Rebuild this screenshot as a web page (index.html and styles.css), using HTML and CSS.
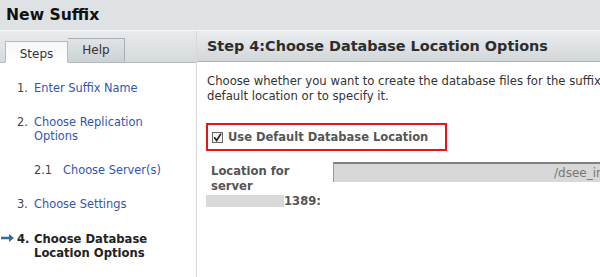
FILE: index.html
```html
<!DOCTYPE html>
<html>
<head>
<meta charset="utf-8">
<link rel="stylesheet" href="styles.css">
</head>
<body>
<div class="app">
  <div class="titlebar">New Suffix</div>
  <div class="main">
    <div class="left">
      <div class="tabs">
        <div class="tab active">Steps</div>
        <div class="tab">Help</div>
      </div>
      <ol class="steps">
        <li class="step"><span class="num">1.</span><a class="link">Enter Suffix Name</a></li>
        <li class="step"><span class="num">2.</span><a class="link">Choose Replication<br>Options</a></li>
        <li class="step sub"><span class="num">2.1</span><a class="link">Choose Server(s)</a></li>
        <li class="step"><span class="num">3.</span><a class="link">Choose Settings</a></li>
        <li class="step current">
          <svg class="arrow" width="13" height="8" viewBox="0 0 13 8"><path d="M0 2.8h8V0l5 4-5 4V5.2H0z" fill="#2e6f9e"/></svg>
          <span class="num">4.</span><span>Choose Database<br>Location Options</span>
        </li>
      </ol>
    </div>
    <div class="right">
      <div class="header">Step 4:Choose Database Location Options</div>
      <div class="content">
        <p class="desc">Choose whether you want to create the database files for the suffix in the default location or to specify it.</p>
        <label class="check-box">
          <span class="checkbox"><svg width="11" height="11" viewBox="0 0 11 11"><path d="M2.2 5.2l2.4 3.2L9 1.6" fill="none" stroke="#222" stroke-width="1.7"/></svg></span>
          <span class="check-label">Use Default Database Location</span>
        </label>
        <div class="location">
          <div class="loc-label">Location for<br>server<br><span class="redact"></span>1389:</div>
          <div class="loc-input"><span class="path">/dsee_instance</span></div>
        </div>
      </div>
    </div>
  </div>
</div>
</body>
</html>
```
FILE: styles.css
```css
html, body {
  margin: 0;
  padding: 0;
  background: #fff;
}
body {
  width: 600px;
  height: 277px;
  overflow: hidden;
  font-family: "DejaVu Sans", sans-serif;
  font-size: 12px;
  color: #333;
}
.app {
  width: 600px;
  height: 277px;
  display: flex;
  flex-direction: column;
}
.titlebar {
  height: 31px;
  flex-shrink: 0;
  box-sizing: border-box;
  padding: 6px 0 0 6px;
  background: #dee2e4;
  border-bottom: 1px solid #f4f6f7;
  font-weight: bold;
  font-size: 15.6px;
  line-height: 18px;
  color: #111;
}
.main {
  flex: 1;
  display: flex;
  min-height: 0;
}
.left {
  width: 196px;
  flex-shrink: 0;
  border-right: 1px solid #d6d8da;
  display: flex;
  flex-direction: column;
}
.tabs {
  height: 32px;
  flex-shrink: 0;
  box-sizing: border-box;
  background: linear-gradient(#e8ebed, #d6dadd);
  border-bottom: 1px solid #b5babd;
  display: flex;
  align-items: flex-end;
  padding-left: 5px;
}
.tab {
  height: 24px;
  box-sizing: border-box;
  border: 1px solid #a9afb3;
  border-bottom: none;
  padding: 4px 0 0;
  line-height: 15px;
  text-align: center;
  font-size: 12px;
  color: #333;
  background: linear-gradient(#e0e4e7, #ccd1d4);
  width: 57px;
}
.tab.active {
  width: 63px;
  background: linear-gradient(#f5f6f7, #fff);
  border-color: #b5babd;
  height: 22px;
  padding-top: 5px;
  margin-bottom: -1px;
  border-bottom: 1px solid #fff;
}
.tab + .tab {
  border-left: none;
  margin-bottom: 0;
}
.steps {
  list-style: none;
  margin: 0;
  padding: 18px 0 0 0;
}
.step {
  position: relative;
  display: flex;
  padding-left: 17px;
  line-height: 14px;
  margin-bottom: 20px;
  font-size: 11.4px;
}
.step .num {
  width: 17px;
  flex-shrink: 0;
  color: #444;
}
.step.sub {
  padding-left: 34px;
}
.step.sub .num {
  width: 29px;
}
.link {
  color: #3355b0;
  white-space: nowrap;
}
.step.current {
  font-weight: bold;
  color: #222;
  margin-top: 21px;
  font-size: 11.6px;
}
.step.current .num {
  color: #222;
}
.arrow {
  position: absolute;
  left: 1px;
  top: 2px;
}
.right {
  flex: 1;
  min-width: 0;
  display: flex;
  flex-direction: column;
  overflow: hidden;
}
.header {
  height: 31px;
  flex-shrink: 0;
  box-sizing: border-box;
  padding: 7px 0 0 10px;
  line-height: 17px;
  background: linear-gradient(#eaedef, #d2d7da);
  border-bottom: 1px solid #aeb3b6;
  font-weight: bold;
  font-size: 14.4px;
  color: #2d2d2d;
  white-space: nowrap;
}
.content {
  padding: 12px 0 0 10px;
}
.desc {
  margin: 0;
  width: 460px;
  line-height: 15px;
  font-size: 11.65px;
  color: #333;
}
.check-box {
  margin-top: 19px;
  width: 241px;
  height: 28px;
  box-sizing: border-box;
  border: 2px solid #e8141c;
  display: flex;
  align-items: center;
  padding-left: 4px;
  margin-left: -1px;
}
.checkbox {
  width: 11px;
  height: 11px;
  flex-shrink: 0;
  box-sizing: border-box;
  border: 1px solid #666;
  background: #f4f4f4;
  display: flex;
  margin-right: 5px;
}
.checkbox svg {
  margin: -1px;
}
.check-label {
  font-weight: bold;
  font-size: 11.5px;
  color: #555;
  white-space: nowrap;
}
.location {
  display: flex;
  margin-top: 10px;
}
.loc-label {
  width: 122px;
  flex-shrink: 0;
  font-weight: bold;
  font-size: 11.6px;
  line-height: 15px;
  color: #555;
  padding: 3px 0 0 4px;
}
.redact {
  display: inline-block;
  width: 78px;
  height: 12px;
  background: #d9d9d9;
  margin-left: -5px;
  vertical-align: -2px;
}
.loc-input {
  flex: 1;
  height: 20px;
  margin-top: 1px;
  box-sizing: border-box;
  border-top: 2px solid #7f7f7f;
  border-left: 1px solid #999;
  background: #d8d8d8;
  overflow: hidden;
  white-space: nowrap;
  padding: 2px 0 0 220px;
  font-size: 12px;
  color: #777;
}
```
